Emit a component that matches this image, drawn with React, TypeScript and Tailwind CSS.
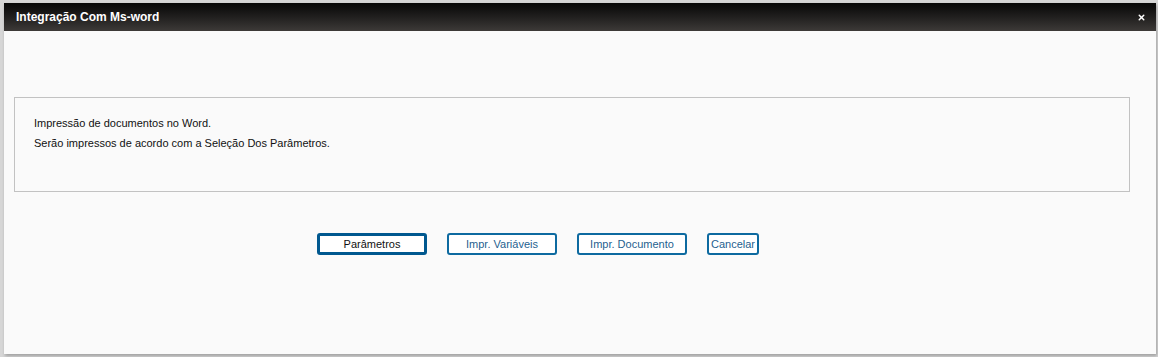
import { X } from "lucide-react";

const buttons = [
  { label: "Parâmetros", w: "w-[110px]", active: true },
  { label: "Impr. Variáveis", w: "w-[110px]", active: false },
  { label: "Impr. Documento", w: "w-[110px]", active: false },
  { label: "Cancelar", w: "w-[52px]", active: false },
];

export default function App() {
  return (
    <div className="w-[1158px] h-[357px] bg-[#d6d6d6] pl-[4px] pt-[3px] pr-[2px] pb-[3px]" style={{ fontFamily: "Arial, 'Liberation Sans', sans-serif" }}>
      <div className="h-full flex flex-col bg-[#fafafa] shadow-[1px_2px_3px_rgba(0,0,0,0.25)]">
        {/* Header */}
        <div className="h-[28px] shrink-0 flex items-center justify-between pl-[12px] pr-[10px] bg-gradient-to-b from-[#080808] to-[#3d3a38]">
          <span className="text-white font-bold text-[12px]">Integração Com Ms-word</span>
          <X className="w-[9px] h-[9px] text-white" strokeWidth={4} />
        </div>

        {/* Body */}
        <div className="flex-1 pt-[66px] px-[10px]">
          <div className="h-[95px] mr-[16px] border border-[#c2c2c2] pl-[19px] pt-[15px] text-[11px] text-[#111] leading-[20px]">
            <p>Impressão de documentos no Word.</p>
            <p>Serão impressos de acordo com a Seleção Dos Parâmetros.</p>
          </div>

          <div className="flex justify-center gap-[20px] mt-[41px] pr-[84px]">
            {buttons.map((b) => (
              <button
                key={b.label}
                className={
                  b.active
                    ? `${b.w} h-[22px] rounded-[3px] border-[3px] border-[#00588f] bg-white text-[11px] text-[#111] leading-none`
                    : `${b.w} h-[22px] rounded-[3px] border-2 border-[#0d6aa0] bg-white text-[11px] text-[#1f5f8f] leading-none`
                }
              >
                {b.label}
              </button>
            ))}
          </div>
        </div>
      </div>
    </div>
  );
}
